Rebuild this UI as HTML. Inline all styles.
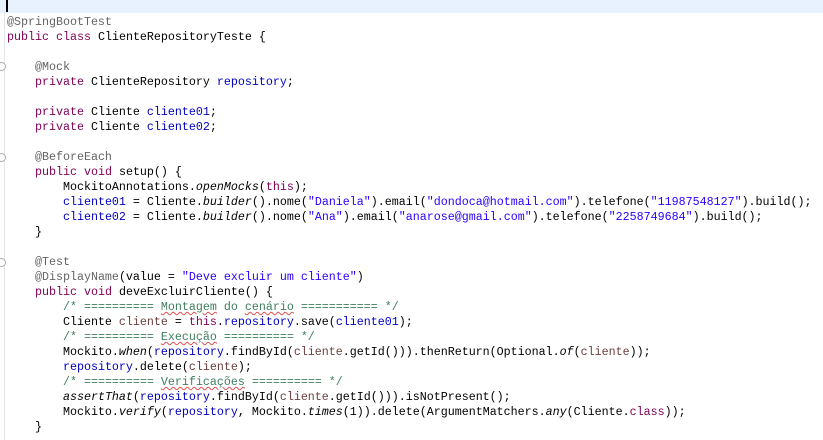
<!DOCTYPE html>
<html><head><meta charset="utf-8"><style>
html,body{margin:0;padding:0;background:#fff;width:823px;height:440px;overflow:hidden;position:relative}
.cur{position:absolute;left:0;top:0;width:823px;height:13px;background:#e8f2fe}
.caret{position:absolute;left:6px;top:0;width:2px;height:12px;background:#000}
.gl{position:absolute;left:4px;top:13px;width:1px;height:427px;background:#e4e4e4}
.fold{position:absolute;left:-3px;width:7px;height:7px;border:1px solid #aaa;border-radius:50%;background:#fff}
pre{position:absolute;left:7px;top:15px;margin:0;font-family:"Liberation Mono",monospace;font-size:11.67px;line-height:15px;color:#000}
.k{color:#7f0055}
.a{color:#646464}
.f{color:#0000c0}
.s{color:#2a00ff}
.c{color:#3f7f5f}
.v{color:#6a3e3e}
i{font-style:italic}
.sp{text-decoration:underline wavy #e05050;text-decoration-thickness:1px}
</style></head><body>
<div class="cur"></div><div class="caret"></div><div class="gl"></div>
<div class="fold" style="top:62px"></div>
<div class="fold" style="top:153px"></div>
<div class="fold" style="top:258px"></div>
<pre><span class="a">@SpringBootTest</span>
<span class="k">public</span> <span class="k">class</span> ClienteRepositoryTeste {

    <span class="a">@Mock</span>
    <span class="k">private</span> ClienteRepository <span class="f">repository</span>;

    <span class="k">private</span> Cliente <span class="f">cliente01</span>;
    <span class="k">private</span> Cliente <span class="f">cliente02</span>;

    <span class="a">@BeforeEach</span>
    <span class="k">public</span> <span class="k">void</span> setup() {
        MockitoAnnotations.<i>openMocks</i>(<span class="k">this</span>);
        <span class="f">cliente01</span> = Cliente.<i>builder</i>().nome(<span class="s">"Daniela"</span>).email(<span class="s">"dondoca@hotmail.com"</span>).telefone(<span class="s">"11987548127"</span>).build();
        <span class="f">cliente02</span> = Cliente.<i>builder</i>().nome(<span class="s">"Ana"</span>).email(<span class="s">"anarose@gmail.com"</span>).telefone(<span class="s">"2258749684"</span>).build();
    }

    <span class="a">@Test</span>
    <span class="a">@DisplayName</span>(value = <span class="s">"Deve excluir um cliente"</span>)
    <span class="k">public</span> <span class="k">void</span> deveExcluirCliente() {
        <span class="c">/* ========== <span class="sp">Montagem</span> do <span class="sp">cenário</span> =========== */</span>
        Cliente <span class="v">cliente</span> = <span class="k">this</span>.<span class="f">repository</span>.save(<span class="f">cliente01</span>);
        <span class="c">/* ========== <span class="sp">Execução</span> ========== */</span>
        Mockito.<i>when</i>(<span class="f">repository</span>.findById(<span class="v">cliente</span>.getId())).thenReturn(Optional.<i>of</i>(<span class="v">cliente</span>));
        <span class="f">repository</span>.delete(<span class="v">cliente</span>);
        <span class="c">/* ========== <span class="sp">Verificações</span> ========== */</span>
        <i>assertThat</i>(<span class="f">repository</span>.findById(<span class="v">cliente</span>.getId())).isNotPresent();
        Mockito.<i>verify</i>(<span class="f">repository</span>, Mockito.<i>times</i>(1)).delete(ArgumentMatchers.<i>any</i>(Cliente.<span class="k">class</span>));
    }</pre>
</body></html>
